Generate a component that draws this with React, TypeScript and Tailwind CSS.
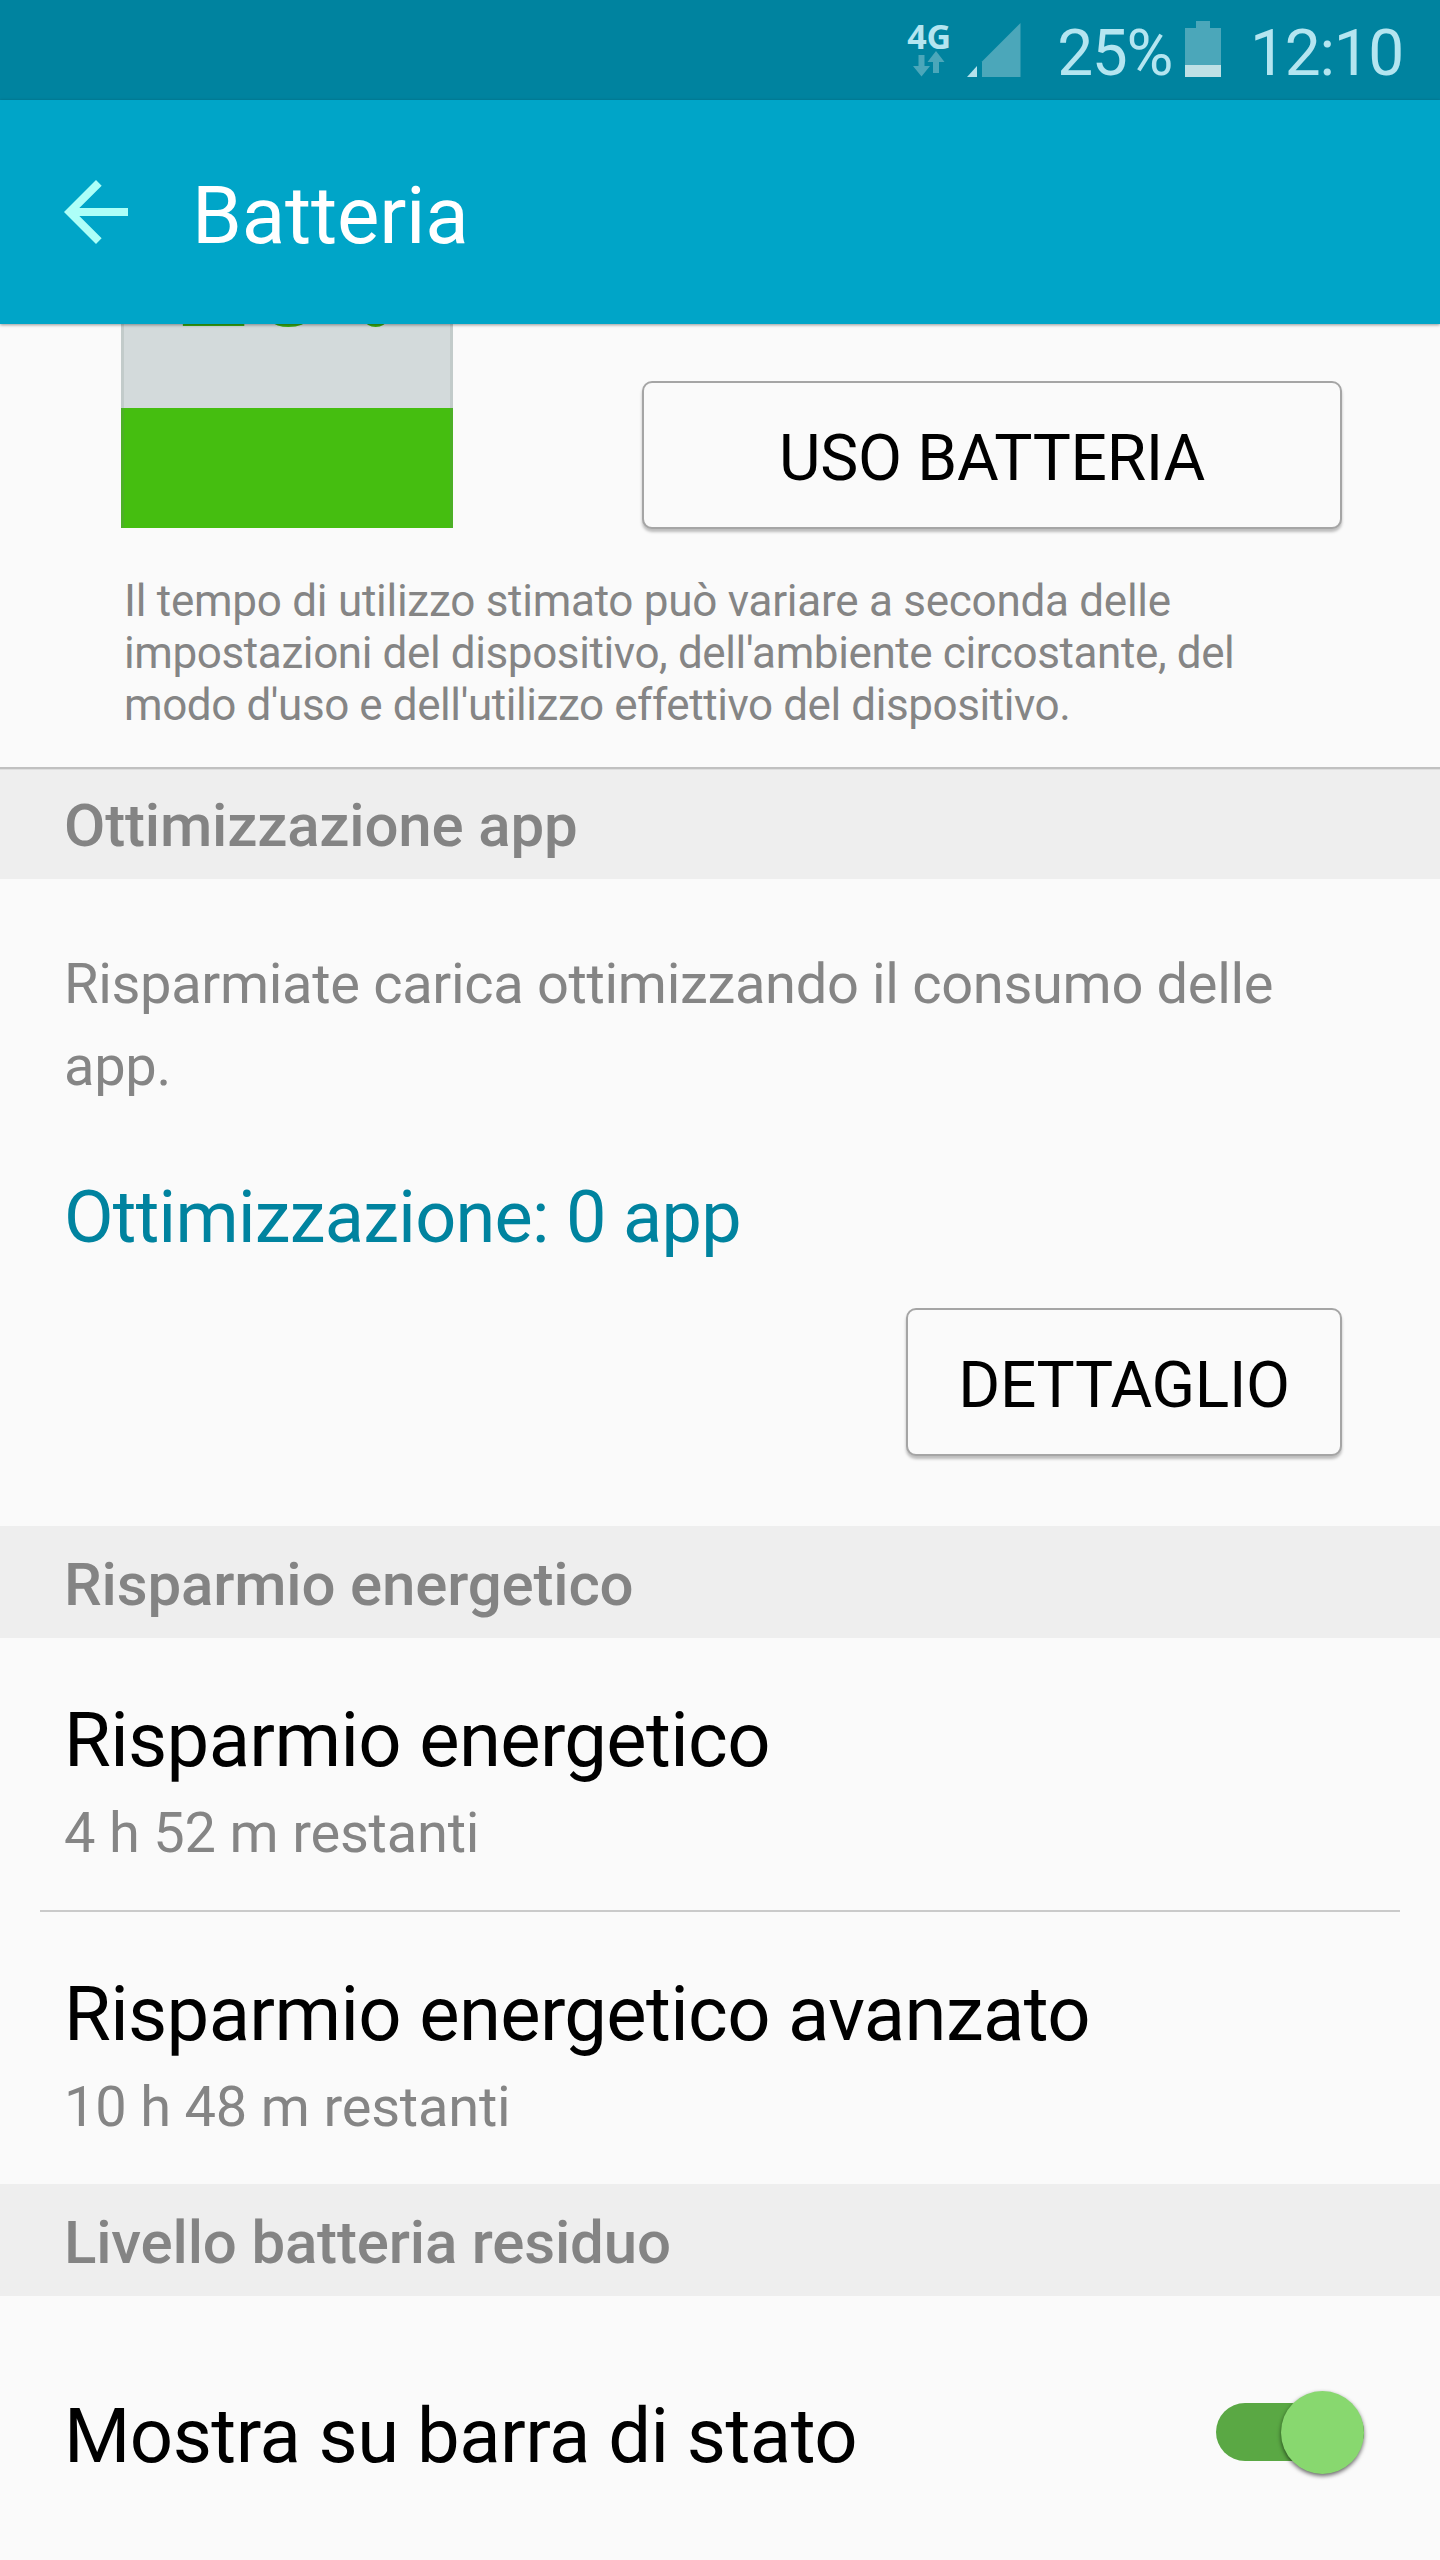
import type { ReactNode } from 'react';

function NetworkIcon() {
  return (
    <div className="flex w-[46px] flex-col items-center tracking-normal">
      <span className="h-[32px] font-['Open_Sans',sans-serif] text-[34px] leading-[34px] font-bold">4G</span>
      <svg width="32" height="26" viewBox="0 0 32 26" className="fill-[#4ba7ba]">
        <path d="M5.500 4h6v11H17L8.500 25.500 0 15h5.500z" />
        <path d="M20 22h6V11h5.500L23 0l-8.500 11H20z" />
      </svg>
    </div>
  );
}

function SignalIcon() {
  return (
    <svg width="54" height="54" viewBox="0 0 54 54">
      <path d="M53.500 0V54H15V38.500Z" className="fill-[#4ba7ba]" />
      <path d="M0 54L10 43V54Z" className="fill-[#b4e2ec]" />
    </svg>
  );
}

function BatteryIcon() {
  return (
    <svg width="36" height="56" viewBox="0 0 36 56">
      <path d="M11 0h14v7h11v37H0V7h11z" className="fill-[#4ba7ba]" />
      <path d="M0 44h36v12H0z" className="fill-[#bfe0e5]" />
    </svg>
  );
}

function StatusBar() {
  return (
    <div className="flex h-[100px] items-end justify-end bg-[#00839f] pr-[37px] pb-[23px] text-[64px] tracking-[-1.300px] text-[#b4e5f0]">
      <NetworkIcon />
      <div className="ml-[15px]">
        <SignalIcon />
      </div>
      <span className="ml-[36px] h-[61px] leading-[75px]">25%</span>
      <div className="ml-[13px]">
        <BatteryIcon />
      </div>
      <span className="ml-[29px] h-[61px] leading-[75px]">12:10</span>
    </div>
  );
}

function SectionHeader({ children, divider }: { children: ReactNode; divider?: boolean }) {
  return (
    <h2
      className={`flex h-[112px] items-center bg-[#eeeeee] px-16 pt-[5px] text-[60px] leading-none font-medium tracking-[-0.170px] text-[#848484] ${
        divider ? 'shadow-[inset_0_2px_0_#c0c0c0,inset_0_3px_0_#dedede]' : ''
      }`}
    >
      {children}
    </h2>
  );
}

function Button({ children }: { children: ReactNode }) {
  return (
    <button className="h-[148px] w-full rounded-[10px] border-2 border-[#a5a5a5] bg-[#fafafa] pt-[8px] text-[64px] leading-none tracking-[-0.300px] shadow-[0_3px_3px_rgba(0,0,0,0.25)]">
      {children}
    </button>
  );
}

function SettingRow({ title, subtitle }: { title: string; subtitle: string }) {
  return (
    <div className="h-[272px] px-16 pt-[58px]">
      <p className="text-[76px] leading-[88px] tracking-[-0.640px]">{title}</p>
      <p className="mt-[16px] text-[56px] leading-[66px] tracking-[-0.200px] text-[#858585]">{subtitle}</p>
    </div>
  );
}

function BatteryLevel() {
  return (
    <div className="relative h-[204px] w-[332px] overflow-hidden">
      <div className="h-[84px] border-x-[3px] border-[#c2cbca] bg-[#d3dadb]" />
      <div className="h-[120px] border-x-[3px] border-[#4cb026] bg-[#45be10]" />
      {/* Percentage is scrolled under the app bar */}
      <div className="absolute -top-[109px] left-[54px] flex items-baseline leading-none text-[#3bab14]">
        <span className="text-[132px]">25</span>
        <span className="text-[96px]">%</span>
      </div>
    </div>
  );
}

export default function App() {
  return (
    <div className="h-[2560px] w-[1440px] overflow-hidden bg-[#fafafa] font-['Roboto',sans-serif] text-black">
      <StatusBar />
      <header className="relative z-10 flex h-[224px] items-center bg-[#00a5c8] px-16 text-white shadow-[0_1px_3px_rgba(0,0,0,0.4)]">
        <svg width="64" height="64" viewBox="4 4 16 16" className="fill-[#adfff8]">
          <path d="M20 11H7.830l5.590-5.590L12 4l-8 8 8 8 1.410-1.410L7.830 13H20v-2z" />
        </svg>
        <h1 className="ml-16 pt-[8px] text-[80px] leading-none tracking-[-0.200px]">Batteria</h1>
      </header>

      {/* Battery usage */}
      <section className="h-[443px]">
        <div className="flex justify-between pr-[98px] pl-[121px]">
          <BatteryLevel />
          <div className="mt-[57px] w-[700px]">
            <Button>USO BATTERIA</Button>
          </div>
        </div>
        <p className="mt-[46px] pl-[124px] text-[44px] leading-[52px] text-[#858585]">
          <span className="block tracking-[-0.260px]">Il tempo di utilizzo stimato può variare a seconda delle</span>
          <span className="block tracking-[-0.390px]">impostazioni del dispositivo, dell'ambiente circostante, del</span>
          <span className="block tracking-[-0.420px]">modo d'uso e dell'utilizzo effettivo del dispositivo.</span>
        </p>
      </section>

      {/* App optimization */}
      <SectionHeader divider>Ottimizzazione app</SectionHeader>
      <section className="h-[647px] px-16 pt-[64px]">
        <p className="text-[56px] leading-[82px] tracking-[-0.320px] text-[#858585]">
          Risparmiate carica ottimizzando il consumo delle
          <br />
          app.
        </p>
        <p className="mt-[69px] text-[72px] leading-[84px] tracking-[-0.680px] text-[#00839f]">Ottimizzazione: 0 app</p>
        <div className="mt-[48px] mr-[34px] ml-auto w-[436px]">
          <Button>DETTAGLIO</Button>
        </div>
      </section>

      {/* Power saving */}
      <SectionHeader>Risparmio energetico</SectionHeader>
      <SettingRow title="Risparmio energetico" subtitle="4 h 52 m restanti" />
      <div className="mx-10 h-[2px] bg-[#cacaca]" />
      <SettingRow title="Risparmio energetico avanzato" subtitle="10 h 48 m restanti" />

      {/* Remaining level */}
      <SectionHeader>Livello batteria residuo</SectionHeader>
      <div className="flex items-center justify-between pt-[94px] pr-[76px] pl-16">
        <p className="pt-[8px] text-[76px] leading-none tracking-[-0.520px]">Mostra su barra di stato</p>
        <div className="flex h-[58px] w-[148px] items-center justify-end rounded-full bg-[#5aa844]">
          <div className="size-[83px] shrink-0 rounded-full bg-[#88d86f] shadow-[0_2px_4px_rgba(0,0,0,0.6)]" />
        </div>
      </div>
    </div>
  );
}
